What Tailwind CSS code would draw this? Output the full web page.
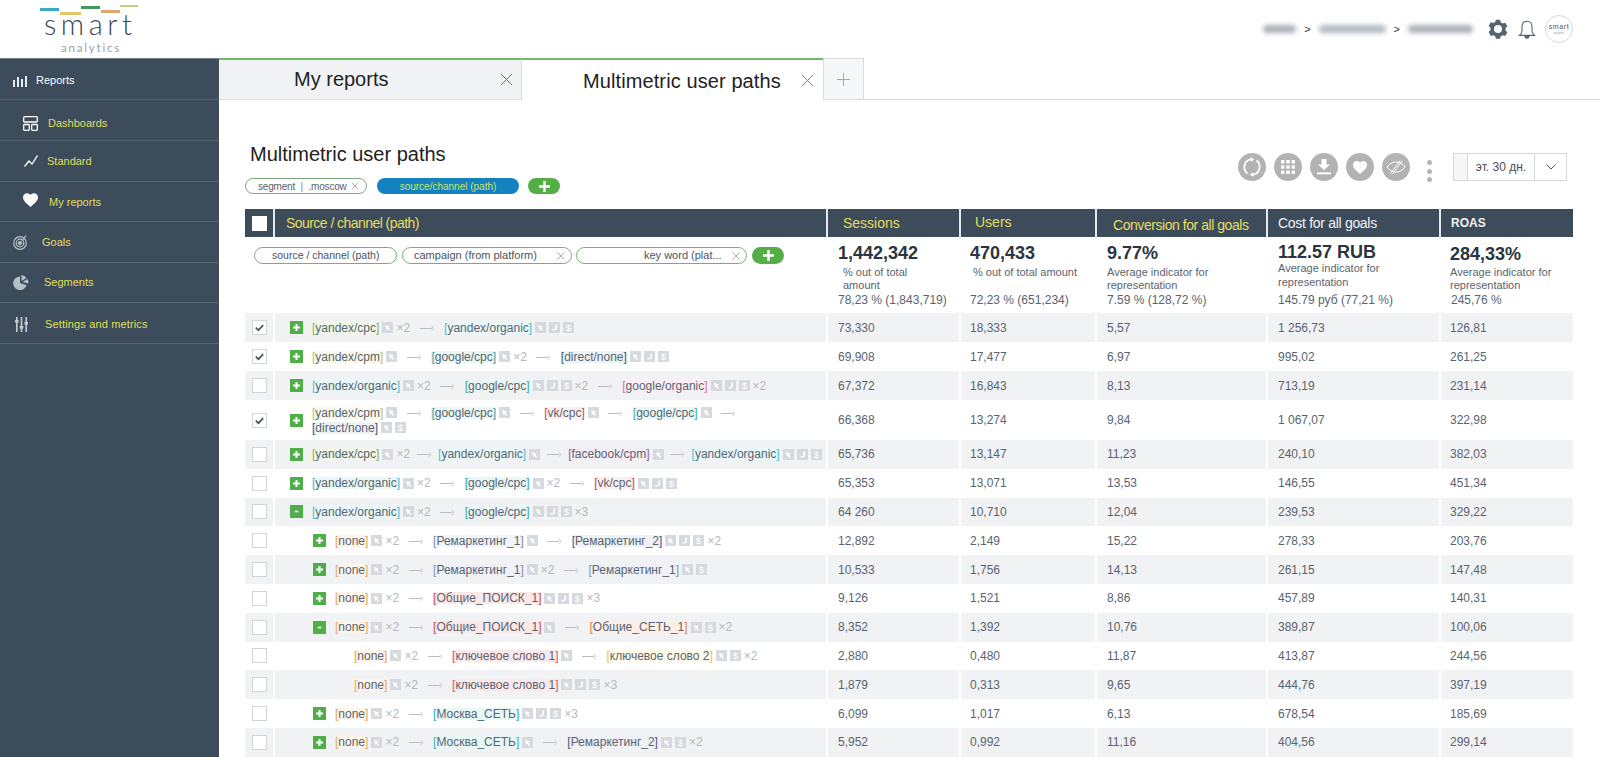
<!doctype html>
<html lang="en">
<head>
<meta charset="utf-8">
<title>Multimetric user paths</title>
<script src="https://cdn.jsdelivr.net/npm/@tailwindcss/browser@4"></script>
</head>
<body class="h-screen w-full overflow-hidden bg-white font-['Liberation_Sans',Arial,sans-serif] text-[#59646f]">
<svg class="hidden" xmlns="http://www.w3.org/2000/svg">
  <symbol id="c" viewBox="0 0 11 11"><rect width="11" height="11" fill="#d6d9dd"/><path d="M3 3l5 1.6-1.9.8L8 8l-1 .9-1.8-2.4-.8 1.7z" fill="#fff"/></symbol>
  <symbol id="p" viewBox="0 0 11 11"><rect width="11" height="11" fill="#d6d9dd"/><path d="M8 2.500v3.200c0 1.600-1.200 2.800-2.800 2.800H3.200V7.200h1.600c.9 0 1.600-.6 1.600-1.500V2.500z" fill="#fff"/></symbol>
  <symbol id="d" viewBox="0 0 11 11"><rect width="11" height="11" fill="#d6d9dd"/><text x="5.500" y="9" font-size="9.500" fill="#fff" text-anchor="middle" font-family="Liberation Sans">$</text></symbol>
  <symbol id="a" viewBox="0 0 15 8"><path d="M0 4.500h12" stroke="#b9bdc2" stroke-width="1" fill="none"/><path d="M11.500 2.200L14 4.500l-2.500 2.300" stroke="#b9bdc2" stroke-width=".9" fill="none"/></symbol>
  <symbol id="plus" viewBox="0 0 13 13"><rect width="13" height="13" fill="#4fae4a"/><path d="M6.500 3v7M3 6.500h7" stroke="#fff" stroke-width="2"/></symbol>
  <symbol id="minus" viewBox="0 0 13 13"><rect width="13" height="13" fill="#4fae4a"/><path d="M4.800 6.500h3.400" stroke="#fff" stroke-width="1.600"/></symbol>
  <symbol id="on" viewBox="0 0 15 15"><rect x=".5" y=".5" width="14" height="14" fill="#fff" stroke="#d3d5d8"/><path d="M3.800 7.600l2.600 2.600 4.800-5" stroke="#4b5660" stroke-width="1.700" fill="none"/></symbol>
  <symbol id="off" viewBox="0 0 15 15"><rect x=".5" y=".5" width="14" height="14" fill="#fff" stroke="#d3d5d8"/></symbol>
  <symbol id="x" viewBox="0 0 13 13"><path d="M1 1l11 11M12 1L1 12" stroke="currentColor" stroke-width="1" fill="none"/></symbol>
</svg>

<header class="h-[58px] flex items-center justify-between">
  <div class="relative w-[219px] h-[58px]">
    <span class="absolute left-[40px] top-[8px] w-[19px] h-[3px] bg-[#3aa9c4]"></span>
    <span class="absolute left-[60px] top-[12px] w-[21px] h-[3px] bg-[#e3c46a]"></span>
    <span class="absolute left-[81px] top-[6px] w-[19px] h-[3px] bg-[#3f9a5c]"></span>
    <span class="absolute left-[101px] top-[10px] w-[19px] h-[3px] bg-[#e0a66a]"></span>
    <span class="absolute left-[120px] top-[5px] w-[18px] h-[2px] bg-[#bcd27e]"></span>
    <span class="absolute left-[44px] top-[10px] text-[29px] leading-[28px] tracking-[4.500px] text-[#3f4a54] font-['Lato',sans-serif] font-light">smart</span>
    <span class="absolute left-[61px] top-[41px] text-[11.500px] leading-[14px] tracking-[1.800px] text-[#9a9fa5] font-['Lato',sans-serif]">analytics</span>
  </div>
  <div class="flex items-center pr-[27px]">
    <div class="w-[33px] h-[8px] rounded-full bg-[#aab0b8] blur-[2.500px]"></div>
    <span class="mx-[8px] text-[11px] text-[#333]">&gt;</span>
    <div class="w-[67px] h-[8px] rounded-full bg-[#b2b9c2] blur-[2.500px]"></div>
    <span class="mx-[8px] text-[11px] text-[#333]">&gt;</span>
    <div class="w-[65px] h-[8px] rounded-full bg-[#aab0b8] blur-[2.500px]"></div>
    <svg class="ml-[15px] w-[20px] h-[20px]" viewBox="0 0 24 24"><path fill="#56646f" fill-rule="evenodd" d="M9.500 1h5l.8 3 2.400 1.300 3-.8 2.500 4.300-2.200 2.200v2.800l2.200 2.200-2.500 4.300-3-.8-2.400 1.300-.8 3h-5l-.8-3-2.400-1.300-3 .8L.8 15.500 3 13.300v-2.800L.8 8.300l2.500-4.300 3 .8 2.400-1.300zM12 7.200a4.800 4.800 0 1 0 0 9.600 4.800 4.800 0 0 0 0-9.600z"/></svg>
    <svg class="ml-[9px] w-[20px] h-[21px]" viewBox="0 0 24 24" fill="none" stroke="#56646f" stroke-width="1.300"><path d="M12 2c-4 0-6 3-6 7v5c0 2-1.500 3.500-3 5h18c-1.500-1.500-3-3-3-5V9c0-4-2-7-6-7z"/><path d="M9.500 19.500c0 2 1 3 2.500 3s2.500-1 2.500-3" fill="#56646f"/></svg>
    <div class="ml-[8px] w-[28px] h-[28px] rounded-full border border-[#d5d8da] flex flex-col items-center justify-center">
      <span class="text-[7px] leading-[8px] tracking-[.6px] text-[#4a545e]">smart</span>
      <span class="text-[3px] leading-[4px] text-[#9a9fa5]">analytics</span>
    </div>
  </div>
</header>

<div class="flex h-[699px]">
  <nav class="w-[219px] shrink-0 bg-[#3d4c5a] text-[11px] text-[#e2de5e] border-t border-[#76828c]">
    <div class="h-[41px] flex items-center border-b border-[#56646f] text-white pl-[13px] pt-[3px]">
      <svg class="w-[15px] h-[12px]" viewBox="0 0 15 12" fill="#e8ebee"><rect x="0" y="5" width="2" height="7"/><rect x="4" y="2" width="2" height="10"/><rect x="8" y="4" width="2" height="8"/><rect x="12" y="1" width="2" height="11"/></svg>
      <span class="ml-[8px]">Reports</span>
    </div>
    <div class="h-[41px] flex items-center border-b border-[#56646f] pl-[23px] pt-[7px]">
      <svg class="w-[15px] h-[15px]" viewBox="0 0 15 15" fill="none" stroke="#fff" stroke-width="1.300"><rect x=".7" y=".7" width="13.600" height="5.300" rx=".8"/><rect x=".7" y="8.500" width="5.600" height="5.800" rx=".8"/><rect x="8.700" y="8.500" width="5.600" height="5.800" rx=".8"/></svg>
      <span class="ml-[10px]">Dashboards</span>
    </div>
    <div class="h-[41px] flex items-center border-b border-[#56646f] pl-[24px]">
      <svg class="w-[14px] h-[12px]" viewBox="0 0 14 12" fill="none" stroke="#fff" stroke-width="1.300"><path d="M.5 11.500L5 6l3 3 5.500-8.500"/></svg>
      <span class="ml-[9px]">Standard</span>
    </div>
    <div class="h-[40px] flex items-center border-b border-[#56646f] pl-[23px] pt-[2px]">
      <svg class="w-[15px] h-[14px] -mt-[6px]" viewBox="0 0 24 22" fill="#fff"><path d="M12 22C5 16 0 12 0 6.500 0 2.800 2.800 0 6.500 0 8.800 0 11 1.200 12 3c1-1.800 3.200-3 5.500-3C21.200 0 24 2.800 24 6.500 24 12 19 16 12 22z"/></svg>
      <span class="ml-[11px]">My reports</span>
    </div>
    <div class="h-[41px] flex items-center border-b border-[#56646f] pl-[13px]">
      <svg class="w-[15px] h-[16px]" viewBox="0 0 15 16" fill="none" stroke="#b7c0c8" stroke-width="1.200"><circle cx="7" cy="9" r="6.300"/><circle cx="7" cy="9" r="3.800"/><circle cx="7" cy="9" r="1.500" fill="#b7c0c8"/><path d="M9 7l4-5.500"/></svg>
      <span class="ml-[14px]">Goals</span>
    </div>
    <div class="h-[40px] flex items-center border-b border-[#56646f] pl-[13px]">
      <svg class="w-[16px] h-[15px]" viewBox="0 0 16 15" fill="#b7c0c8"><path d="M7 1.500a6.800 6.800 0 1 0 6.500 8.800L7 8z"/><path d="M8.500 0a7 7 0 0 1 5 3L8.500 6z"/><path d="M9.500 7l5-3a7 7 0 0 1 1 4.500z"/></svg>
      <span class="ml-[15px]">Segments</span>
    </div>
    <div class="h-[41px] flex items-center border-b border-[#56646f] pl-[15px] pt-[2px]">
      <svg class="w-[13px] h-[15px]" viewBox="0 0 13 15" fill="#c3cad0"><rect x="1" y="0" width="1.600" height="15"/><rect x="5.700" y="0" width="1.600" height="15"/><rect x="10.400" y="0" width="1.600" height="15"/><rect y="3" width="3.600" height="2.600"/><rect x="4.700" y="9" width="3.600" height="2.600"/><rect x="9.400" y="5" width="3.600" height="2.600"/></svg>
      <span class="ml-[17px] tracking-[.15px]">Settings and metrics</span>
    </div>
  </nav>

  <main class="flex-1 min-w-0">
    <div class="h-[42px] flex border-b border-[#d9dbdd]">
      <div class="w-[302px] h-[42px] flex items-center bg-[#f1f2f4] border-t-2 border-[#74b56c] border-b border-b-[#d9dbdd] pl-[75px] pr-[8px] justify-between text-[20px] text-[#222]">
        <span class="-mt-[2px]">My reports</span>
        <svg class="w-[13px] h-[13px] text-[#6b7075]"><use href="#x"/></svg>
      </div>
      <div class="w-[302px] h-[42px] flex items-center bg-white border-t-2 border-[#74b56c] border-l border-l-[#d9dbdd] pl-[61px] pr-[9px] justify-between text-[20px] text-[#222]">
        <span class="whitespace-nowrap pt-[2px] tracking-[.1px]">Multimetric user paths</span>
        <svg class="w-[13px] h-[13px] text-[#7c8085]"><use href="#x"/></svg>
      </div>
      <div class="w-[41px] h-[42px] flex items-center justify-center bg-[#f6f7f8] border border-[#d9dbdd] border-b-[#d9dbdd]">
        <svg class="w-[13px] h-[13px]" viewBox="0 0 13 13"><path d="M6.500 0v13M0 6.500h13" stroke="#a6aaae" fill="none"/></svg>
      </div>
    </div>

    <div class="pl-[26px] pr-[27px]">
      <div class="flex justify-between h-[109px]">
        <div class="pt-[42px]">
          <h1 class="pl-[5px] text-[20px] leading-[24px] text-[#222]">Multimetric user paths</h1>
          <div class="flex items-center mt-[12px] h-[16px]">
            <div class="w-[122px] h-[16px] rounded-full border border-[#7ea97a] flex items-center justify-between pl-[12px] pr-[7px] text-[10px] text-[#5a626a]">
              <span class="whitespace-nowrap tracking-[-.2px]">segment <span class="mx-[3px] text-[#888]">|</span> .moscow</span>
              <svg class="w-[8px] h-[8px] text-[#777]"><use href="#x"/></svg>
            </div>
            <div class="ml-[10px] w-[142px] h-[16px] rounded-full bg-[#1582c0] flex items-center justify-center text-[10px] text-[#c6e26a]">source/channel (path)</div>
            <div class="ml-[9px] w-[32px] h-[16px] rounded-full bg-[#55ad45] flex items-center justify-center">
              <svg class="w-[11px] h-[11px]" viewBox="0 0 11 11"><path d="M5.500 0v11M0 5.500h11" stroke="#fff" stroke-width="2.400"/></svg>
            </div>
          </div>
        </div>
        <div class="flex items-start pt-[53px] pr-[6px]">
          <div class="flex gap-[8px]">
            <div class="w-[28px] h-[28px] rounded-full bg-[#b3b3b3] flex items-center justify-center">
              <svg class="w-[20px] h-[20px]" viewBox="0 0 20 20" fill="none" stroke="#fff" stroke-width="1.800"><path d="M5.500 16.500A8 8 0 0 1 9.500 2.200"/><path d="M14.500 3.500a8 8 0 0 1-4 14.300"/><path d="M8.800 0v5l3.400-2.500z" fill="#fff" stroke="none"/><path d="M11.200 20v-5l-3.400 2.500z" fill="#fff" stroke="none"/></svg>
            </div>
            <div class="w-[28px] h-[28px] rounded-full bg-[#b3b3b3] flex items-center justify-center">
              <svg class="w-[14px] h-[14px]" viewBox="0 0 14 14" fill="#fff"><rect width="3.400" height="3.400" rx=".6"/><rect x="5.300" width="3.400" height="3.400" rx=".6"/><rect x="10.600" width="3.400" height="3.400" rx=".6"/><rect y="5.300" width="3.400" height="3.400" rx=".6"/><rect x="5.300" y="5.300" width="3.400" height="3.400" rx=".6"/><rect x="10.600" y="5.300" width="3.400" height="3.400" rx=".6"/><rect y="10.600" width="3.400" height="3.400" rx=".6"/><rect x="5.300" y="10.600" width="3.400" height="3.400" rx=".6"/><rect x="10.600" y="10.600" width="3.400" height="3.400" rx=".6"/></svg>
            </div>
            <div class="w-[28px] h-[28px] rounded-full bg-[#b3b3b3] flex items-center justify-center">
              <svg class="w-[16px] h-[16px]" viewBox="0 0 16 16" fill="#fff"><path d="M5.500 0h5v5.500H14L8 11 2 5.500h3.500z"/><rect x="1" y="13.300" width="14" height="2"/></svg>
            </div>
            <div class="w-[28px] h-[28px] rounded-full bg-[#b3b3b3] flex items-center justify-center">
              <svg class="w-[14px] h-[13px]" viewBox="0 0 24 22" fill="#fff"><path d="M12 22C5 16 0 12 0 6.500 0 2.800 2.800 0 6.500 0 8.800 0 11 1.200 12 3c1-1.800 3.200-3 5.500-3C21.200 0 24 2.800 24 6.500 24 12 19 16 12 22z"/></svg>
            </div>
            <div class="w-[28px] h-[28px] rounded-full bg-[#b3b3b3] flex items-center justify-center">
              <svg class="w-[20px] h-[16px]" viewBox="0 0 20 16" fill="none" stroke="#fff" stroke-width="1"><path d="M1 8c2.500-3.500 5.500-5 9-5s6.500 1.500 9 5c-2.500 3.500-5.500 5-9 5s-6.500-1.500-9-5z"/><path d="M4.500 14.500L14 1.500M6.500 15L16 2"/></svg>
            </div>
          </div>
          <div class="ml-[16px] mt-[7px] w-[6px] flex flex-col gap-[3.500px] items-center">
            <span class="w-[5px] h-[5px] rounded-full bg-[#b0b5ba]"></span>
            <span class="w-[5px] h-[5px] rounded-full bg-[#b0b5ba]"></span>
            <span class="w-[5px] h-[5px] rounded-full bg-[#b0b5ba]"></span>
          </div>
          <div class="ml-[21px] w-[114px] h-[28px] border border-[#d5d7d9] flex text-[12px] text-[#4a4f54]">
            <div class="w-[14px] bg-[#f7f7f8] border-r border-[#d5d7d9]"></div>
            <div class="flex-1 flex items-center justify-center">эт. 30 дн.</div>
            <div class="w-[32px] border-l border-[#d5d7d9] flex items-center justify-center">
              <svg class="w-[10px] h-[6px]" viewBox="0 0 10 6" fill="none" stroke="#555"><path d="M.5.500L5 5 9.500.500"/></svg>
            </div>
          </div>
        </div>
      </div>

      <div class="w-[1328px]">
        <div class="grid grid-cols-[30px_553px_133px_136px_171px_173px_132px] divide-x-2 divide-[#e6e9ec] h-[28px] bg-[#3d4c5a] text-[14px]">
          <div class="flex items-center pl-[7px]"><div class="w-[15px] h-[15px] bg-white"></div></div>
          <div class="flex items-center pl-[11px] text-[#e2de5e] tracking-[-.55px]">Source / channel (path)</div>
          <div class="flex items-center pl-[15px] text-[#e2de5e]">Sessions</div>
          <div class="flex items-center pl-[14px] text-[#e2de5e] -mt-[1px]">Users</div>
          <div class="flex items-center pl-[16px] pt-[4px] text-[#e2de5e] tracking-[-.45px] whitespace-nowrap">Conversion for all goals</div>
          <div class="flex items-center pl-[10px] text-[#f1f3f5] tracking-[-.3px]">Cost for all goals</div>
          <div class="flex items-center pl-[10px] text-[12px] font-bold text-[#f1f3f5]">ROAS</div>
        </div>

        <div class="grid grid-cols-[583px_133px_136px_171px_173px_132px] divide-x-2 divide-white h-[76px]">
          <div class="pl-[9px] pt-[10px]">
            <div class="flex items-center h-[17px] text-[11px] text-[#4a545e]">
              <div class="w-[143px] h-[17px] rounded-full border border-[#7ea97a] flex items-center pl-[17px] whitespace-nowrap text-[10.500px]">source / channel (path)</div>
              <div class="ml-[5px] w-[170px] h-[17px] rounded-full border border-[#7ea97a] flex items-center justify-between pl-[11px] pr-[6px] whitespace-nowrap">campaign (from platform)<svg class="w-[8px] h-[8px] text-[#777]"><use href="#x"/></svg></div>
              <div class="ml-[4px] w-[171px] h-[17px] rounded-full border border-[#7ea97a] flex items-center justify-between pl-[67px] pr-[6px] whitespace-nowrap">key word (plat...<svg class="w-[8px] h-[8px] text-[#777]"><use href="#x"/></svg></div>
              <div class="ml-[5px] w-[32px] h-[17px] rounded-full bg-[#55ad45] flex items-center justify-center">
                <svg class="w-[11px] h-[11px]" viewBox="0 0 11 11"><path d="M5.500 0v11M0 5.500h11" stroke="#fff" stroke-width="2.400"/></svg>
              </div>
            </div>
          </div>
          <div class="flex flex-col pl-[10px] pt-[6px] pb-[6px]">
            <div class="text-[18px] leading-[20px] font-bold text-[#2b3440]">1,442,342</div>
            <div class="pl-[5px] mt-[3px] text-[11px] leading-[13px]">% out of total<br>amount</div>
            <div class="mt-auto text-[12px] leading-[14px]">78,23 % (1,843,719)</div>
          </div>
          <div class="flex flex-col pl-[9px] pt-[6px] pb-[6px]">
            <div class="text-[18px] leading-[20px] font-bold text-[#2b3440]">470,433</div>
            <div class="pl-[3px] mt-[3px] text-[11px] leading-[13px] whitespace-nowrap">% out of total amount</div>
            <div class="mt-auto text-[12px] leading-[14px]">72,23 % (651,234)</div>
          </div>
          <div class="flex flex-col pl-[10px] pt-[6px] pb-[6px]">
            <div class="text-[18px] leading-[20px] font-bold text-[#2b3440]">9.77%</div>
            <div class="mt-[3px] text-[11px] leading-[13px]">Average indicator for<br>representation</div>
            <div class="mt-auto text-[12px] leading-[14px]">7.59 % (128,72 %)</div>
          </div>
          <div class="flex flex-col pl-[10px] pt-[5px] pb-[6px]">
            <div class="text-[18px] leading-[20px] font-bold text-[#2b3440]">112.57 RUB</div>
            <div class="-mt-[1px] text-[11px] leading-[14px]">Average indicator for<br>representation</div>
            <div class="mt-auto text-[12px] leading-[14px]">145.79 руб (77,21 %)</div>
          </div>
          <div class="flex flex-col pl-[9px] pt-[7px] pb-[6px]">
            <div class="text-[18px] leading-[20px] font-bold text-[#2b3440]">284,33%</div>
            <div class="mt-[2px] text-[11px] leading-[13px]">Average indicator for<br>representation</div>
            <div class="mt-auto pl-[1px] text-[12px] leading-[14px]">245,76 %</div>
          </div>
        </div>

        <div class="text-[12px] leading-none">
          <!-- 1 -->
          <div class="grid grid-cols-[30px_553px_133px_136px_171px_173px_132px] divide-x-2 divide-white h-[29px] bg-[#f1f2f4]">
            <div class="flex items-center pl-[7px]"><svg class="w-[15px] h-[15px]"><use href="#on"/></svg></div>
            <div class="flex items-center gap-[3px] pl-[15px] whitespace-nowrap">
              <svg class="w-[13px] h-[13px] mr-[6px]"><use href="#plus"/></svg>
              <span class="bg-[#f0f7e6] text-[#8fb24d]">[<b class="font-normal text-[#59646f]">yandex/cpc</b>]</span>
              <svg class="w-[11px] h-[11px]"><use href="#c"/></svg><span class="text-[#b5b9bd]">×2</span>
              <svg class="w-[15px] h-[8px] mx-[6.500px]"><use href="#a"/></svg>
              <span class="bg-[#e8f8fa] text-[#4cc0cf]">[<b class="font-normal text-[#59646f]">yandex/organic</b>]</span>
              <svg class="w-[11px] h-[11px]"><use href="#c"/></svg><svg class="w-[11px] h-[11px]"><use href="#p"/></svg><svg class="w-[11px] h-[11px]"><use href="#d"/></svg>
            </div>
            <div class="flex items-center pl-[10px]">73,330</div><div class="flex items-center pl-[9px]">18,333</div><div class="flex items-center pl-[10px]">5,57</div><div class="flex items-center pl-[10px]">1 256,73</div><div class="flex items-center pl-[9px]">126,81</div>
          </div>
          <!-- 2 -->
          <div class="grid grid-cols-[30px_553px_133px_136px_171px_173px_132px] divide-x-2 divide-white h-[29px]">
            <div class="flex items-center pl-[7px]"><svg class="w-[15px] h-[15px]"><use href="#on"/></svg></div>
            <div class="flex items-center gap-[3px] pl-[15px] whitespace-nowrap">
              <svg class="w-[13px] h-[13px] mr-[6px]"><use href="#plus"/></svg>
              <span class="bg-[#fafaea] text-[#c8c47a]">[<b class="font-normal text-[#59646f]">yandex/cpm</b>]</span>
              <svg class="w-[11px] h-[11px]"><use href="#c"/></svg>
              <svg class="w-[15px] h-[8px] mx-[6.500px]"><use href="#a"/></svg>
              <span class="bg-[#e8f6f6] text-[#3aa9a9]">[<b class="font-normal text-[#59646f]">google/cpc</b>]</span>
              <svg class="w-[11px] h-[11px]"><use href="#c"/></svg><span class="text-[#b5b9bd]">×2</span>
              <svg class="w-[15px] h-[8px] mx-[6.500px]"><use href="#a"/></svg>
              <span class="bg-[#eef3f6] text-[#35607a]">[<b class="font-normal text-[#59646f]">direct/none</b>]</span>
              <svg class="w-[11px] h-[11px]"><use href="#c"/></svg><svg class="w-[11px] h-[11px]"><use href="#p"/></svg><svg class="w-[11px] h-[11px]"><use href="#d"/></svg>
            </div>
            <div class="flex items-center pl-[10px]">69,908</div><div class="flex items-center pl-[9px]">17,477</div><div class="flex items-center pl-[10px]">6,97</div><div class="flex items-center pl-[10px]">995,02</div><div class="flex items-center pl-[9px]">261,25</div>
          </div>
          <!-- 3 -->
          <div class="grid grid-cols-[30px_553px_133px_136px_171px_173px_132px] divide-x-2 divide-white h-[29px] bg-[#f1f2f4]">
            <div class="flex items-center pl-[7px]"><svg class="w-[15px] h-[15px]"><use href="#off"/></svg></div>
            <div class="flex items-center gap-[3px] pl-[15px] whitespace-nowrap">
              <svg class="w-[13px] h-[13px] mr-[6px]"><use href="#plus"/></svg>
              <span class="bg-[#e8f8fa] text-[#4cc0cf]">[<b class="font-normal text-[#59646f]">yandex/organic</b>]</span>
              <svg class="w-[11px] h-[11px]"><use href="#c"/></svg><span class="text-[#b5b9bd]">×2</span>
              <svg class="w-[15px] h-[8px] mx-[6.500px]"><use href="#a"/></svg>
              <span class="bg-[#e8f6f6] text-[#3aa9a9]">[<b class="font-normal text-[#59646f]">google/cpc</b>]</span>
              <svg class="w-[11px] h-[11px]"><use href="#c"/></svg><svg class="w-[11px] h-[11px]"><use href="#p"/></svg><svg class="w-[11px] h-[11px]"><use href="#d"/></svg><span class="text-[#b5b9bd]">×2</span>
              <svg class="w-[15px] h-[8px] mx-[6.500px]"><use href="#a"/></svg>
              <span class="bg-[#fbeef5] text-[#d078a8]">[<b class="font-normal text-[#59646f]">google/organic</b>]</span>
              <svg class="w-[11px] h-[11px]"><use href="#c"/></svg><svg class="w-[11px] h-[11px]"><use href="#p"/></svg><svg class="w-[11px] h-[11px]"><use href="#d"/></svg><span class="text-[#b5b9bd]">×2</span>
            </div>
            <div class="flex items-center pl-[10px]">67,372</div><div class="flex items-center pl-[9px]">16,843</div><div class="flex items-center pl-[10px]">8,13</div><div class="flex items-center pl-[10px]">713,19</div><div class="flex items-center pl-[9px]">231,14</div>
          </div>
          <!-- 4 -->
          <div class="grid grid-cols-[30px_553px_133px_136px_171px_173px_132px] divide-x-2 divide-white h-[40px]">
            <div class="flex items-center pl-[7px]"><svg class="w-[15px] h-[15px]"><use href="#on"/></svg></div>
            <div class="flex items-center pl-[15px] whitespace-nowrap">
              <svg class="w-[13px] h-[13px] mr-[9px]"><use href="#plus"/></svg>
              <div class="flex flex-col gap-[3px] leading-[12px]">
                <div class="flex items-center gap-[3px]">
                  <span class="bg-[#fafaea] text-[#c8c47a]">[<b class="font-normal text-[#59646f]">yandex/cpm</b>]</span>
                  <svg class="w-[11px] h-[11px]"><use href="#c"/></svg>
                  <svg class="w-[15px] h-[8px] mx-[6.500px]"><use href="#a"/></svg>
                  <span class="bg-[#e8f6f6] text-[#3aa9a9]">[<b class="font-normal text-[#59646f]">google/cpc</b>]</span>
                  <svg class="w-[11px] h-[11px]"><use href="#c"/></svg>
                  <svg class="w-[15px] h-[8px] mx-[6.500px]"><use href="#a"/></svg>
                  <span class="bg-[#fdeeee] text-[#d05050]">[<b class="font-normal text-[#59646f]">vk/cpc</b>]</span>
                  <svg class="w-[11px] h-[11px]"><use href="#c"/></svg>
                  <svg class="w-[15px] h-[8px] mx-[6.500px]"><use href="#a"/></svg>
                  <span class="bg-[#e8f8f6] text-[#40b0b0]">[<b class="font-normal text-[#59646f]">google/cpc</b>]</span>
                  <svg class="w-[11px] h-[11px]"><use href="#c"/></svg>
                  <svg class="w-[15px] h-[8px] mx-[6.500px]"><use href="#a"/></svg>
                </div>
                <div class="flex items-center gap-[3px]">
                  <span class="bg-[#eef3f6] text-[#35607a]">[<b class="font-normal text-[#59646f]">direct/none</b>]</span>
                  <svg class="w-[11px] h-[11px]"><use href="#c"/></svg><svg class="w-[11px] h-[11px]"><use href="#d"/></svg>
                </div>
              </div>
            </div>
            <div class="flex items-center pl-[10px]">66,368</div><div class="flex items-center pl-[9px]">13,274</div><div class="flex items-center pl-[10px]">9,84</div><div class="flex items-center pl-[10px]">1 067,07</div><div class="flex items-center pl-[9px]">322,98</div>
          </div>
          <!-- 5 -->
          <div class="grid grid-cols-[30px_553px_133px_136px_171px_173px_132px] divide-x-2 divide-white h-[28.800px] bg-[#f1f2f4]">
            <div class="flex items-center pl-[7px]"><svg class="w-[15px] h-[15px]"><use href="#off"/></svg></div>
            <div class="flex items-center gap-[3px] pl-[15px] whitespace-nowrap">
              <svg class="w-[13px] h-[13px] mr-[6px]"><use href="#plus"/></svg>
              <span class="bg-[#f0f7e6] text-[#8fb24d]">[<b class="font-normal text-[#59646f]">yandex/cpc</b>]</span>
              <svg class="w-[11px] h-[11px]"><use href="#c"/></svg><span class="text-[#b5b9bd]">×2</span>
              <svg class="w-[15px] h-[8px] mx-[3.500px]"><use href="#a"/></svg>
              <span class="bg-[#e8f8fa] text-[#4cc0cf]">[<b class="font-normal text-[#59646f]">yandex/organic</b>]</span>
              <svg class="w-[11px] h-[11px]"><use href="#c"/></svg>
              <svg class="w-[15px] h-[8px] mx-[3.500px]"><use href="#a"/></svg>
              <span class="bg-[#f3eef5] text-[#8a6a9a]">[<b class="font-normal text-[#59646f]">facebook/cpm</b>]</span>
              <svg class="w-[11px] h-[11px]"><use href="#c"/></svg>
              <svg class="w-[15px] h-[8px] mx-[3.500px]"><use href="#a"/></svg>
              <span class="bg-[#e8f8fa] text-[#4cc0cf]">[<b class="font-normal text-[#59646f]">yandex/organic</b>]</span>
              <svg class="w-[11px] h-[11px]"><use href="#c"/></svg><svg class="w-[11px] h-[11px]"><use href="#p"/></svg><svg class="w-[11px] h-[11px]"><use href="#d"/></svg>
            </div>
            <div class="flex items-center pl-[10px]">65,736</div><div class="flex items-center pl-[9px]">13,147</div><div class="flex items-center pl-[10px]">11,23</div><div class="flex items-center pl-[10px]">240,10</div><div class="flex items-center pl-[9px]">382,03</div>
          </div>
          <!-- 6 -->
          <div class="grid grid-cols-[30px_553px_133px_136px_171px_173px_132px] divide-x-2 divide-white h-[28.800px]">
            <div class="flex items-center pl-[7px]"><svg class="w-[15px] h-[15px]"><use href="#off"/></svg></div>
            <div class="flex items-center gap-[3px] pl-[15px] whitespace-nowrap">
              <svg class="w-[13px] h-[13px] mr-[6px]"><use href="#plus"/></svg>
              <span class="bg-[#e8f8fa] text-[#4cc0cf]">[<b class="font-normal text-[#59646f]">yandex/organic</b>]</span>
              <svg class="w-[11px] h-[11px]"><use href="#c"/></svg><span class="text-[#b5b9bd]">×2</span>
              <svg class="w-[15px] h-[8px] mx-[6.500px]"><use href="#a"/></svg>
              <span class="bg-[#e8f6f6] text-[#3aa9a9]">[<b class="font-normal text-[#59646f]">google/cpc</b>]</span>
              <svg class="w-[11px] h-[11px]"><use href="#c"/></svg><span class="text-[#b5b9bd]">×2</span>
              <svg class="w-[15px] h-[8px] mx-[6.500px]"><use href="#a"/></svg>
              <span class="bg-[#fdeeee] text-[#d05050]">[<b class="font-normal text-[#59646f]">vk/cpc</b>]</span>
              <svg class="w-[11px] h-[11px]"><use href="#c"/></svg><svg class="w-[11px] h-[11px]"><use href="#p"/></svg><svg class="w-[11px] h-[11px]"><use href="#d"/></svg>
            </div>
            <div class="flex items-center pl-[10px]">65,353</div><div class="flex items-center pl-[9px]">13,071</div><div class="flex items-center pl-[10px]">13,53</div><div class="flex items-center pl-[10px]">146,55</div><div class="flex items-center pl-[9px]">451,34</div>
          </div>
          <!-- 7 -->
          <div class="grid grid-cols-[30px_553px_133px_136px_171px_173px_132px] divide-x-2 divide-white h-[28.800px] bg-[#f1f2f4]">
            <div class="flex items-center pl-[7px]"><svg class="w-[15px] h-[15px]"><use href="#off"/></svg></div>
            <div class="flex items-center gap-[3px] pl-[15px] whitespace-nowrap">
              <svg class="w-[13px] h-[13px] mr-[6px]"><use href="#minus"/></svg>
              <span class="bg-[#e8f8fa] text-[#4cc0cf]">[<b class="font-normal text-[#59646f]">yandex/organic</b>]</span>
              <svg class="w-[11px] h-[11px]"><use href="#c"/></svg><span class="text-[#b5b9bd]">×2</span>
              <svg class="w-[15px] h-[8px] mx-[6.500px]"><use href="#a"/></svg>
              <span class="bg-[#e8f6f6] text-[#3aa9a9]">[<b class="font-normal text-[#59646f]">google/cpc</b>]</span>
              <svg class="w-[11px] h-[11px]"><use href="#c"/></svg><svg class="w-[11px] h-[11px]"><use href="#p"/></svg><svg class="w-[11px] h-[11px]"><use href="#d"/></svg><span class="text-[#b5b9bd]">×3</span>
            </div>
            <div class="flex items-center pl-[10px]">64 260</div><div class="flex items-center pl-[9px]">10,710</div><div class="flex items-center pl-[10px]">12,04</div><div class="flex items-center pl-[10px]">239,53</div><div class="flex items-center pl-[9px]">329,22</div>
          </div>
          <!-- 8 -->
          <div class="grid grid-cols-[30px_553px_133px_136px_171px_173px_132px] divide-x-2 divide-white h-[28.800px]">
            <div class="flex items-center pl-[7px]"><svg class="w-[15px] h-[15px]"><use href="#off"/></svg></div>
            <div class="flex items-center gap-[3px] pl-[38px] whitespace-nowrap">
              <svg class="w-[13px] h-[13px] mr-[6px]"><use href="#plus"/></svg>
              <span class="bg-[#fdf4ea] text-[#e8a860]">[<b class="font-normal text-[#59646f]">none</b>]</span>
              <svg class="w-[11px] h-[11px]"><use href="#c"/></svg><span class="text-[#b5b9bd]">×2</span>
              <svg class="w-[15px] h-[8px] mx-[6.500px]"><use href="#a"/></svg>
              <span class="bg-[#f2f4f8] text-[#8a94a8]">[<b class="font-normal text-[#59646f]">Ремаркетинг_1</b>]</span>
              <svg class="w-[11px] h-[11px]"><use href="#c"/></svg>
              <svg class="w-[15px] h-[8px] mx-[6.500px]"><use href="#a"/></svg>
              <span class="bg-[#eef1f6] text-[#4a5a7a]">[<b class="font-normal text-[#59646f]">Ремаркетинг_2</b>]</span>
              <svg class="w-[11px] h-[11px]"><use href="#c"/></svg><svg class="w-[11px] h-[11px]"><use href="#p"/></svg><svg class="w-[11px] h-[11px]"><use href="#d"/></svg><span class="text-[#b5b9bd]">×2</span>
            </div>
            <div class="flex items-center pl-[10px]">12,892</div><div class="flex items-center pl-[9px]">2,149</div><div class="flex items-center pl-[10px]">15,22</div><div class="flex items-center pl-[10px]">278,33</div><div class="flex items-center pl-[9px]">203,76</div>
          </div>
          <!-- 9 -->
          <div class="grid grid-cols-[30px_553px_133px_136px_171px_173px_132px] divide-x-2 divide-white h-[28.800px] bg-[#f1f2f4]">
            <div class="flex items-center pl-[7px]"><svg class="w-[15px] h-[15px]"><use href="#off"/></svg></div>
            <div class="flex items-center gap-[3px] pl-[38px] whitespace-nowrap">
              <svg class="w-[13px] h-[13px] mr-[6px]"><use href="#plus"/></svg>
              <span class="bg-[#fdf4ea] text-[#e8a860]">[<b class="font-normal text-[#59646f]">none</b>]</span>
              <svg class="w-[11px] h-[11px]"><use href="#c"/></svg><span class="text-[#b5b9bd]">×2</span>
              <svg class="w-[15px] h-[8px] mx-[6.500px]"><use href="#a"/></svg>
              <span class="bg-[#eef1f8] text-[#8a94a8]">[<b class="font-normal text-[#59646f]">Ремаркетинг_1</b>]</span>
              <svg class="w-[11px] h-[11px]"><use href="#c"/></svg><span class="text-[#b5b9bd]">×2</span>
              <svg class="w-[15px] h-[8px] mx-[6.500px]"><use href="#a"/></svg>
              <span class="bg-[#eef1f8] text-[#8a94a8]">[<b class="font-normal text-[#59646f]">Ремаркетинг_1</b>]</span>
              <svg class="w-[11px] h-[11px]"><use href="#c"/></svg><svg class="w-[11px] h-[11px]"><use href="#d"/></svg>
            </div>
            <div class="flex items-center pl-[10px]">10,533</div><div class="flex items-center pl-[9px]">1,756</div><div class="flex items-center pl-[10px]">14,13</div><div class="flex items-center pl-[10px]">261,15</div><div class="flex items-center pl-[9px]">147,48</div>
          </div>
          <!-- 10 -->
          <div class="grid grid-cols-[30px_553px_133px_136px_171px_173px_132px] divide-x-2 divide-white h-[28.800px]">
            <div class="flex items-center pl-[7px]"><svg class="w-[15px] h-[15px]"><use href="#off"/></svg></div>
            <div class="flex items-center gap-[3px] pl-[38px] whitespace-nowrap">
              <svg class="w-[13px] h-[13px] mr-[6px]"><use href="#plus"/></svg>
              <span class="bg-[#fdf4ea] text-[#e8a860]">[<b class="font-normal text-[#59646f]">none</b>]</span>
              <svg class="w-[11px] h-[11px]"><use href="#c"/></svg><span class="text-[#b5b9bd]">×2</span>
              <svg class="w-[15px] h-[8px] mx-[6.500px]"><use href="#a"/></svg>
              <span class="bg-[#fde8e8] text-[#d05050]">[<b class="font-normal text-[#59646f]">Общие_ПОИСК_1</b>]</span>
              <svg class="w-[11px] h-[11px]"><use href="#c"/></svg><svg class="w-[11px] h-[11px]"><use href="#p"/></svg><svg class="w-[11px] h-[11px]"><use href="#d"/></svg><span class="text-[#b5b9bd]">×3</span>
            </div>
            <div class="flex items-center pl-[10px]">9,126</div><div class="flex items-center pl-[9px]">1,521</div><div class="flex items-center pl-[10px]">8,86</div><div class="flex items-center pl-[10px]">457,89</div><div class="flex items-center pl-[9px]">140,31</div>
          </div>
          <!-- 11 -->
          <div class="grid grid-cols-[30px_553px_133px_136px_171px_173px_132px] divide-x-2 divide-white h-[28.800px] bg-[#f1f2f4]">
            <div class="flex items-center pl-[7px]"><svg class="w-[15px] h-[15px]"><use href="#off"/></svg></div>
            <div class="flex items-center gap-[3px] pl-[38px] whitespace-nowrap">
              <svg class="w-[13px] h-[13px] mr-[6px]"><use href="#minus"/></svg>
              <span class="bg-[#fdf4ea] text-[#e8a860]">[<b class="font-normal text-[#59646f]">none</b>]</span>
              <svg class="w-[11px] h-[11px]"><use href="#c"/></svg><span class="text-[#b5b9bd]">×2</span>
              <svg class="w-[15px] h-[8px] mx-[6.500px]"><use href="#a"/></svg>
              <span class="bg-[#fde8e8] text-[#d05050]">[<b class="font-normal text-[#59646f]">Общие_ПОИСК_1</b>]</span>
              <svg class="w-[11px] h-[11px]"><use href="#c"/></svg>
              <svg class="w-[15px] h-[8px] mx-[6.500px]"><use href="#a"/></svg>
              <span class="bg-[#fdeee6] text-[#d88050]">[<b class="font-normal text-[#59646f]">Общие_СЕТЬ_1</b>]</span>
              <svg class="w-[11px] h-[11px]"><use href="#c"/></svg><svg class="w-[11px] h-[11px]"><use href="#d"/></svg><span class="text-[#b5b9bd]">×2</span>
            </div>
            <div class="flex items-center pl-[10px]">8,352</div><div class="flex items-center pl-[9px]">1,392</div><div class="flex items-center pl-[10px]">10,76</div><div class="flex items-center pl-[10px]">389,87</div><div class="flex items-center pl-[9px]">100,06</div>
          </div>
          <!-- 12 -->
          <div class="grid grid-cols-[30px_553px_133px_136px_171px_173px_132px] divide-x-2 divide-white h-[28.800px]">
            <div class="flex items-center pl-[7px]"><svg class="w-[15px] h-[15px]"><use href="#off"/></svg></div>
            <div class="flex items-center gap-[3px] pl-[79px] whitespace-nowrap">
              <span class="bg-[#fdf4ea] text-[#e8a860]">[<b class="font-normal text-[#59646f]">none</b>]</span>
              <svg class="w-[11px] h-[11px]"><use href="#c"/></svg><span class="text-[#b5b9bd]">×2</span>
              <svg class="w-[15px] h-[8px] mx-[6.500px]"><use href="#a"/></svg>
              <span class="bg-[#fbe8ea] text-[#d06070]">[<b class="font-normal text-[#59646f]">ключевое слово 1</b>]</span>
              <svg class="w-[11px] h-[11px]"><use href="#c"/></svg>
              <svg class="w-[15px] h-[8px] mx-[6.500px]"><use href="#a"/></svg>
              <span class="bg-[#fffbe8] text-[#e8c860]">[<b class="font-normal text-[#59646f]">ключевое слово 2</b>]</span>
              <svg class="w-[11px] h-[11px]"><use href="#c"/></svg><svg class="w-[11px] h-[11px]"><use href="#d"/></svg><span class="text-[#b5b9bd]">×2</span>
            </div>
            <div class="flex items-center pl-[10px]">2,880</div><div class="flex items-center pl-[9px]">0,480</div><div class="flex items-center pl-[10px]">11,87</div><div class="flex items-center pl-[10px]">413,87</div><div class="flex items-center pl-[9px]">244,56</div>
          </div>
          <!-- 13 -->
          <div class="grid grid-cols-[30px_553px_133px_136px_171px_173px_132px] divide-x-2 divide-white h-[28.800px] bg-[#f1f2f4]">
            <div class="flex items-center pl-[7px]"><svg class="w-[15px] h-[15px]"><use href="#off"/></svg></div>
            <div class="flex items-center gap-[3px] pl-[79px] whitespace-nowrap">
              <span class="bg-[#fdf4ea] text-[#e8a860]">[<b class="font-normal text-[#59646f]">none</b>]</span>
              <svg class="w-[11px] h-[11px]"><use href="#c"/></svg><span class="text-[#b5b9bd]">×2</span>
              <svg class="w-[15px] h-[8px] mx-[6.500px]"><use href="#a"/></svg>
              <span class="bg-[#fbe8ea] text-[#d06070]">[<b class="font-normal text-[#59646f]">ключевое слово 1</b>]</span>
              <svg class="w-[11px] h-[11px]"><use href="#c"/></svg><svg class="w-[11px] h-[11px]"><use href="#p"/></svg><svg class="w-[11px] h-[11px]"><use href="#d"/></svg><span class="text-[#b5b9bd]">×3</span>
            </div>
            <div class="flex items-center pl-[10px]">1,879</div><div class="flex items-center pl-[9px]">0,313</div><div class="flex items-center pl-[10px]">9,65</div><div class="flex items-center pl-[10px]">444,76</div><div class="flex items-center pl-[9px]">397,19</div>
          </div>
          <!-- 14 -->
          <div class="grid grid-cols-[30px_553px_133px_136px_171px_173px_132px] divide-x-2 divide-white h-[28.800px]">
            <div class="flex items-center pl-[7px]"><svg class="w-[15px] h-[15px]"><use href="#off"/></svg></div>
            <div class="flex items-center gap-[3px] pl-[38px] whitespace-nowrap">
              <svg class="w-[13px] h-[13px] mr-[6px]"><use href="#plus"/></svg>
              <span class="bg-[#fdf4ea] text-[#e8a860]">[<b class="font-normal text-[#59646f]">none</b>]</span>
              <svg class="w-[11px] h-[11px]"><use href="#c"/></svg><span class="text-[#b5b9bd]">×2</span>
              <svg class="w-[15px] h-[8px] mx-[6.500px]"><use href="#a"/></svg>
              <span class="bg-[#e8f8f6] text-[#40b0b0]">[<b class="font-normal text-[#59646f]">Москва_СЕТЬ</b>]</span>
              <svg class="w-[11px] h-[11px]"><use href="#c"/></svg><svg class="w-[11px] h-[11px]"><use href="#p"/></svg><svg class="w-[11px] h-[11px]"><use href="#d"/></svg><span class="text-[#b5b9bd]">×3</span>
            </div>
            <div class="flex items-center pl-[10px]">6,099</div><div class="flex items-center pl-[9px]">1,017</div><div class="flex items-center pl-[10px]">6,13</div><div class="flex items-center pl-[10px]">678,54</div><div class="flex items-center pl-[9px]">185,69</div>
          </div>
          <!-- 15 -->
          <div class="grid grid-cols-[30px_553px_133px_136px_171px_173px_132px] divide-x-2 divide-white h-[28.800px] bg-[#f1f2f4]">
            <div class="flex items-center pl-[7px]"><svg class="w-[15px] h-[15px]"><use href="#off"/></svg></div>
            <div class="flex items-center gap-[3px] pl-[38px] whitespace-nowrap">
              <svg class="w-[13px] h-[13px] mr-[6px]"><use href="#plus"/></svg>
              <span class="bg-[#fdf4ea] text-[#e8a860]">[<b class="font-normal text-[#59646f]">none</b>]</span>
              <svg class="w-[11px] h-[11px]"><use href="#c"/></svg><span class="text-[#b5b9bd]">×2</span>
              <svg class="w-[15px] h-[8px] mx-[6.500px]"><use href="#a"/></svg>
              <span class="bg-[#e8f8f6] text-[#40b0b0]">[<b class="font-normal text-[#59646f]">Москва_СЕТЬ</b>]</span>
              <svg class="w-[11px] h-[11px]"><use href="#c"/></svg>
              <svg class="w-[15px] h-[8px] mx-[6.500px]"><use href="#a"/></svg>
              <span class="bg-[#eef1f8] text-[#4a5a7a]">[<b class="font-normal text-[#59646f]">Ремаркетинг_2</b>]</span>
              <svg class="w-[11px] h-[11px]"><use href="#c"/></svg><svg class="w-[11px] h-[11px]"><use href="#d"/></svg><span class="text-[#b5b9bd]">×2</span>
            </div>
            <div class="flex items-center pl-[10px]">5,952</div><div class="flex items-center pl-[9px]">0,992</div><div class="flex items-center pl-[10px]">11,16</div><div class="flex items-center pl-[10px]">404,56</div><div class="flex items-center pl-[9px]">299,14</div>
          </div>
        </div>
      </div>
    </div>
  </main>
</div>
</body>
</html>
